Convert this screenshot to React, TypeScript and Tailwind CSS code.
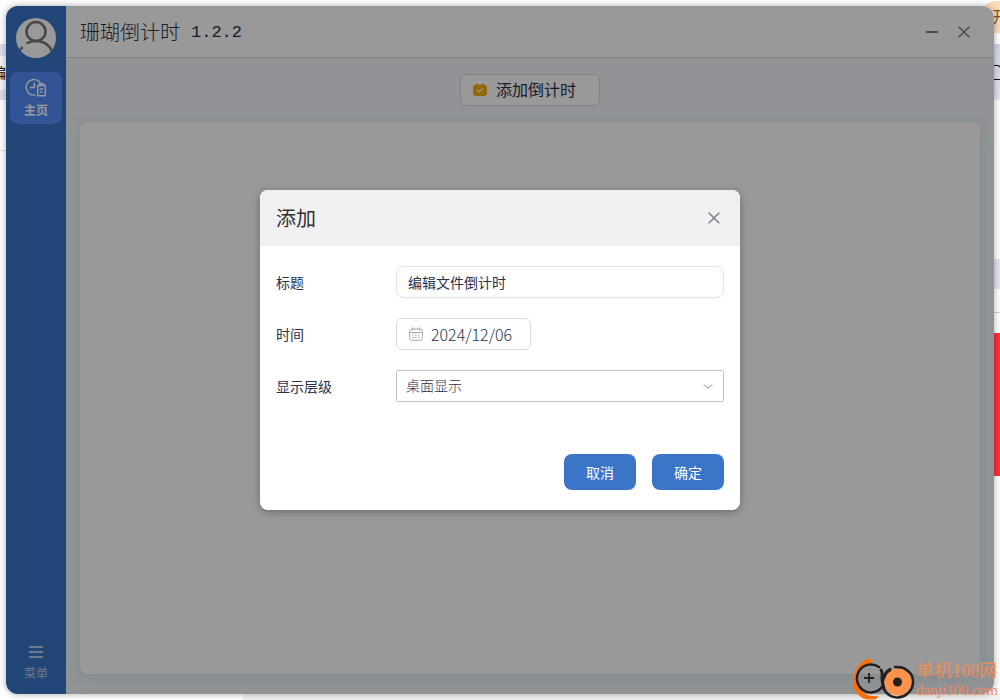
import React, { useState } from "react";

const sans = "font-['Noto_Sans','Noto_Sans_CJK_SC',sans-serif]";

function AvatarIcon() {
  return (
    <svg viewBox="0 0 40 40" className="size-10 rounded-full bg-white" aria-hidden="true">
      <g fill="none" stroke="#75757c" strokeWidth="2.500">
        <circle cx="20" cy="13.500" r="9.500" />
        <path d="M10.500 25.500c8-4.500 18-3 23.500 4l1.500 3.500" />
        <path d="M3 33.500l3.500-4.500" />
      </g>
    </svg>
  );
}

function HomeIcon() {
  return (
    <svg viewBox="0 0 22 20" className="h-5 w-[22px]" fill="none" stroke="#fff" strokeWidth="1.400" aria-hidden="true">
      <path d="M10.500 17A7.800 7.800 0 1 1 15.500 5" />
      <path d="M9.300 4.700v4.800H4.800" />
      <path d="M12.700 7.500h7.600v10.300h-7.600zM14.500 7.500V5.800h4v1.700M14.800 11h3.400M14.800 14h2.500" strokeLinejoin="round" />
    </svg>
  );
}

function CheckBadgeIcon() {
  return (
    <svg viewBox="0 0 14 14" className="size-3.5" aria-hidden="true">
      <path d="M2.300 1.500L4 .5l1.500 1.200h3L10 .5l1.700 1A3 3 0 0 1 14 4.500V10a3 3 0 0 1-3 3H3a3 3 0 0 1-3-3V4.500a3 3 0 0 1 2.300-3z" fill="#f5ad12" />
      <path d="M4.200 6.900l2 2 3.700-3.500" fill="none" stroke="#fff" strokeWidth="1.200" />
    </svg>
  );
}

function CalendarIcon() {
  return (
    <svg viewBox="0 0 14 14" className="size-3.5 shrink-0" fill="none" stroke="#a2a4b3" aria-hidden="true">
      <rect x=".6" y="2" width="12.800" height="11.300" rx="2.500" />
      <path d="M.6 5.500h12.800M3.800.3v3.200M10.200.3v3.200" />
      <path d="M3 8h8M3 10.500h8" strokeDasharray="1.500 1.500" />
    </svg>
  );
}

function CloseIcon() {
  return (
    <svg viewBox="0 0 12 12" className="size-3" fill="none" stroke="currentColor" strokeWidth="1.500" aria-hidden="true">
      <path d="M.7.7l10.600 10.600M11.300.7L.7 11.300" />
    </svg>
  );
}

function Backdrop() {
  return (
    <div className="absolute inset-0 overflow-hidden" aria-hidden="true">
      <div className="absolute top-0 left-0 flex h-full w-5 flex-col overflow-hidden">
        <div className="h-11" />
        <div className="h-3 bg-[#dddfee]" />
        <div className="flex h-[34px] items-center bg-[#f3f3f8]">
          <span className="-ml-2 text-sm text-black">编</span>
        </div>
        <div className="h-2.5 bg-[#dddfea]" />
        <div className="h-[50px]" />
        <div className="h-px bg-[#dedeea]" />
      </div>
      <div className="absolute top-0 right-0 flex h-full w-5 flex-col overflow-hidden">
        <div className="mt-px flex h-8 items-center rounded-l-2xl bg-[#fcdcb8] pl-3">
          <span className="shrink-0 text-base text-[#84501e]">开</span>
        </div>
        <div className="mt-[11px] h-14 bg-linear-to-b from-[#d3d6ea] to-[#e4e4ee]">
          <svg viewBox="0 0 20 56" className="h-14 w-5" fill="none" stroke="#111" strokeWidth="1.200">
            <path d="M12 21.500h6.500l2 2M12 35.500h8" />
          </svg>
        </div>
        <div className="mt-[159px] h-[30px] bg-[#e4e3f0]" />
        <div className="mt-[23px] h-px bg-[#d4d4d8]" />
        <div className="mt-5 h-[143px] bg-[#fc3236]" />
      </div>
      <div className="absolute right-0 bottom-0 left-[243px] h-1.5 bg-[#f1f1f3]" />
    </div>
  );
}

function Sidebar() {
  return (
    <nav className="flex w-15 shrink-0 flex-col items-center bg-[#3a75c8] pt-3 pb-3">
      <AvatarIcon />
      <button type="button" className="mt-3.5 flex size-[52px] flex-col items-center rounded-lg bg-[#508cf8] pt-1.5 text-xs leading-4 font-bold text-white">
        <HomeIcon />
        <span className="mt-[5px]">主页</span>
      </button>
      <button type="button" className="mt-auto flex flex-col items-center gap-2 text-xs leading-4 text-[#b4cae9]">
        <svg viewBox="0 0 14 12" className="h-3 w-3.5" fill="none" stroke="currentColor" strokeWidth="2" aria-hidden="true">
          <path d="M0 1h14M0 6h14M0 11h14" />
        </svg>
        <span>菜单</span>
      </button>
    </nav>
  );
}

function AddDialog() {
  const [title, setTitle] = useState("编辑文件倒计时");
  const [date, setDate] = useState("2024/12/06");
  return (
    <div className="absolute inset-0 flex items-center justify-center bg-black/40">
      <form role="dialog" aria-labelledby="dialog-title" onSubmit={(e) => e.preventDefault()} className="w-full max-w-[480px] overflow-hidden rounded-lg bg-white text-[#2a2f4a] shadow-[0_2px_8px_rgba(0,0,0,0.3)]">
        <header className="flex h-14 items-center justify-between bg-[#f1f1f1] pr-5 pl-4">
          <h2 id="dialog-title" className="pt-0.5 text-xl text-[#303030]">添加</h2>
          <button type="button" aria-label="关闭" className="text-[#7c8092]"><CloseIcon /></button>
        </header>
        <div className="flex flex-col gap-5 px-4 pt-5 text-sm">
          <div className="flex items-center">
            <label htmlFor="title" className="w-30 shrink-0 pt-0.5">标题</label>
            <input id="title" value={title} onChange={(e) => setTitle(e.target.value)} className="h-8 min-w-0 flex-1 rounded-lg border border-[#e2e2e6] px-[11px] outline-none" />
          </div>
          <div className="flex items-center">
            <label htmlFor="date" className="w-30 shrink-0 pt-0.5">时间</label>
            <div className="flex h-8 w-[135px] items-center gap-2 rounded-md border border-[#d8d9e2] pl-3">
              <CalendarIcon />
              <input id="date" value={date} onChange={(e) => setDate(e.target.value)} className="w-full min-w-0 font-['Noto_Sans_CJK_SC',sans-serif] text-base font-light outline-none" />
            </div>
          </div>
          <div className="flex items-center">
            <label htmlFor="level" className="w-30 shrink-0 pt-0.5">显示层级</label>
            <div className="relative flex-1">
              <select id="level" className="block h-8 w-full appearance-none rounded-xs border border-[#c0c1cb] bg-white px-[9px] font-light text-[#2a2f4a] outline-none">
                <option>桌面显示</option>
              </select>
              <svg viewBox="0 0 10 6" className="pointer-events-none absolute top-3.5 right-[11px] h-1.5 w-2.5" fill="none" stroke="#777b8c" aria-hidden="true">
                <path d="M1 .5l4 4 4-4" />
              </svg>
            </div>
          </div>
        </div>
        <footer className="flex justify-end gap-4 px-4 pt-[52px] pb-5 text-sm text-white">
          <button type="button" className="h-9 w-18 rounded-lg bg-[#3a75c8] pt-0.5">取消</button>
          <button type="submit" className="h-9 w-18 rounded-lg bg-[#3a75c8] pt-0.5">确定</button>
        </footer>
      </form>
    </div>
  );
}

function SiteMark() {
  return (
    <div className="absolute right-0.5 bottom-0 flex items-end font-['Liberation_Serif','Noto_Sans_CJK_SC',serif] text-[#ef8b59]">
      <svg viewBox="0 0 64 42" className="h-[42px] w-16" fill="none" aria-hidden="true">
        <path d="M19 1c-5-1-11 4-15 11-5 10-4 20 5 27 4 3 10 3 15 2l3-3c-10 1-17-2-20-9C3 17 8 6 19 5z" fill="#ff6d05" />
        <path d="M27 9A14 14 0 1 0 30 29" stroke="#252020" strokeWidth="2.500" strokeLinecap="round" />
        <path d="M17 15v10M12 20h10" stroke="#252020" strokeWidth="1.800" />
        <path d="M29 12c2 2 1 6 1 10l2 9" stroke="#252020" strokeWidth="3" strokeLinecap="round" />
        <circle cx="46" cy="24" r="13.500" fill="#ff934e" />
        <path d="M38 11c-7 5-9 13-6 20 4 9 16 11 23 5 8-6 8-18 1-23-4-4-8-4-13-4" stroke="#252020" strokeWidth="2.500" strokeLinecap="round" />
        <path d="M32 20c1-4 3-7 6-8" stroke="#252020" strokeWidth="3" strokeLinecap="round" />
        <circle cx="45.500" cy="24" r="4.500" fill="#252020" />
      </svg>
      <div className="pb-px">
        <p className="text-lg leading-5">单机100网</p>
        <p className="text-[15px] leading-[18px]">danji100.com</p>
      </div>
    </div>
  );
}

export default function App() {
  return (
    <div className={`relative flex min-h-screen overflow-hidden bg-white p-1.5 ${sans}`}>
      <Backdrop />
      <div className="relative flex flex-1 overflow-hidden rounded-xl shadow-[0_0_7px_rgba(0,0,0,0.35)]">
        <Sidebar />
        <div className="flex min-w-0 flex-1 flex-col bg-[#f3f6fa]">
          <header className="flex h-[52px] items-center border-b border-[#dcdcdc] bg-white pr-6 pl-3.5 text-[#2d3148]">
            <h1 className="flex items-center gap-[11px] pt-0.5 text-xl font-light">
              <span>珊瑚倒计时</span>
              <span className="font-['Liberation_Mono',monospace] text-[17px]">1.2.2</span>
            </h1>
            <div className="ml-auto flex items-center gap-5 text-[#7b7d86]">
              <button type="button" aria-label="最小化" className="flex h-6 w-3 items-center">
                <span className="h-0.5 w-full bg-current" />
              </button>
              <button type="button" aria-label="关闭"><CloseIcon /></button>
            </div>
          </header>
          <main className="flex flex-1 flex-col items-center gap-4 px-3.5 pt-4 pb-5">
            <button type="button" className="flex h-8 w-[140px] items-center gap-[9px] rounded-md border border-[#d8d9e2] bg-white pl-3 text-base text-[#2d3148]">
              <CheckBadgeIcon />
              <span>添加倒计时</span>
            </button>
            <section className="w-full flex-1 rounded-lg bg-white shadow-[0_4px_16px_rgba(80,170,190,0.18)]" />
          </main>
        </div>
        <AddDialog />
      </div>
      <SiteMark />
    </div>
  );
}
